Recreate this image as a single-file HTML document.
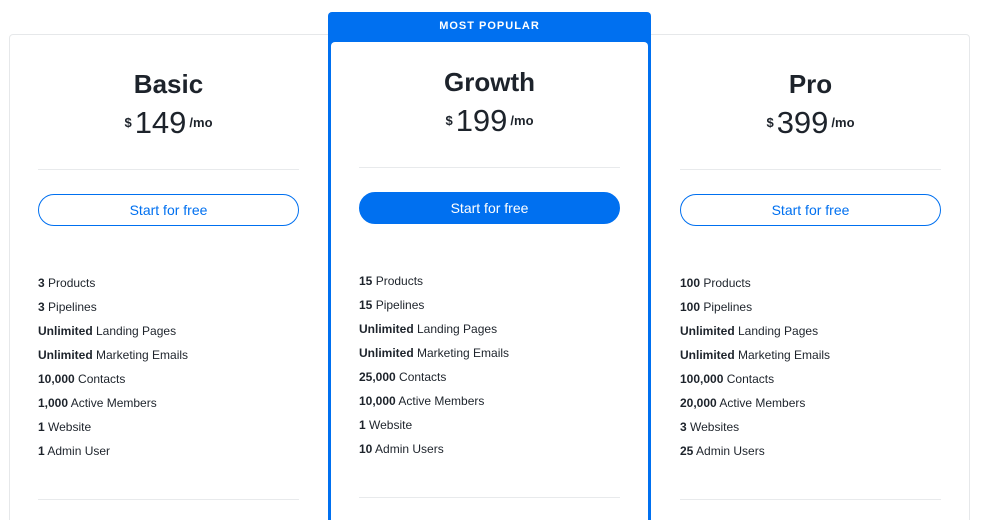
<!DOCTYPE html>
<html><head><style>
html,body{margin:0;width:985px;height:520px;overflow:hidden}
body{background:#fff;font-family:"Liberation Sans",sans-serif;color:#1d232b;position:relative}
.outer{position:absolute;left:9px;top:34px;width:959px;height:500px;border:1px solid #e6e8ea;border-radius:4px;background:#fff}
.pop{position:absolute;left:328px;top:12px;width:323px;height:520px;background:#0070f0;border-radius:4px}
.pop .lbl{position:absolute;top:0;left:0;right:0;height:28px;line-height:28px;text-align:center;color:#fff;font-weight:bold;font-size:11px;letter-spacing:1px}
.pop .in{position:absolute;left:3px;top:30px;right:3px;bottom:0;background:#fff;border-radius:4px 4px 0 0}
.col{position:absolute;width:261px}
.t{position:absolute;left:0;right:0;text-align:center;font-weight:bold;font-size:26px;line-height:30px}
.p{position:absolute;left:0;right:0;text-align:center;line-height:34px;white-space:nowrap}
.p .d{font-size:13px;font-weight:bold;vertical-align:6px}
.p .n{font-size:31px;margin:0 3px}
.p .m{font-size:13px;font-weight:bold;vertical-align:6px}
.hr{position:absolute;left:0;right:0;height:1px;background:#e8eaec}
.b{position:absolute;left:0;right:0;height:30px;border:1px solid #0070f0;border-radius:16px;text-align:center;line-height:30px;font-size:14px;color:#0070f0}
.b.f{background:#0070f0;color:#fff}
.fl{position:absolute;left:0;font-size:12px;line-height:24px;white-space:nowrap}
.fl div{height:24px}
</style></head><body>
<div class="outer"></div>
<div class="pop"><div class="lbl">MOST POPULAR</div><div class="in"></div></div>

<div class="col" style="left:38px;top:0">
<div class="t" style="top:69px">Basic</div>
<div class="p" style="top:106px"><span class="d">$</span><span class="n">149</span><span class="m">/mo</span></div>
<div class="hr" style="top:169px"></div>
<div class="b" style="top:194px">Start for free</div>
<div class="fl" style="top:271px">
<div><b>3</b> Products</div><div><b>3</b> Pipelines</div><div><b>Unlimited</b> Landing Pages</div><div><b>Unlimited</b> Marketing Emails</div><div><b>10,000</b> Contacts</div><div><b>1,000</b> Active Members</div><div><b>1</b> Website</div><div><b>1</b> Admin User</div></div>
<div class="hr" style="top:499px"></div>
</div>

<div class="col" style="left:359px;top:-2px">
<div class="t" style="top:69px">Growth</div>
<div class="p" style="top:106px"><span class="d">$</span><span class="n">199</span><span class="m">/mo</span></div>
<div class="hr" style="top:169px"></div>
<div class="b f" style="top:194px">Start for free</div>
<div class="fl" style="top:271px">
<div><b>15</b> Products</div><div><b>15</b> Pipelines</div><div><b>Unlimited</b> Landing Pages</div><div><b>Unlimited</b> Marketing Emails</div><div><b>25,000</b> Contacts</div><div><b>10,000</b> Active Members</div><div><b>1</b> Website</div><div><b>10</b> Admin Users</div></div>
<div class="hr" style="top:499px"></div>
</div>

<div class="col" style="left:680px;top:0">
<div class="t" style="top:69px">Pro</div>
<div class="p" style="top:106px"><span class="d">$</span><span class="n">399</span><span class="m">/mo</span></div>
<div class="hr" style="top:169px"></div>
<div class="b" style="top:194px">Start for free</div>
<div class="fl" style="top:271px">
<div><b>100</b> Products</div><div><b>100</b> Pipelines</div><div><b>Unlimited</b> Landing Pages</div><div><b>Unlimited</b> Marketing Emails</div><div><b>100,000</b> Contacts</div><div><b>20,000</b> Active Members</div><div><b>3</b> Websites</div><div><b>25</b> Admin Users</div></div>
<div class="hr" style="top:499px"></div>
</div>
</body></html>
